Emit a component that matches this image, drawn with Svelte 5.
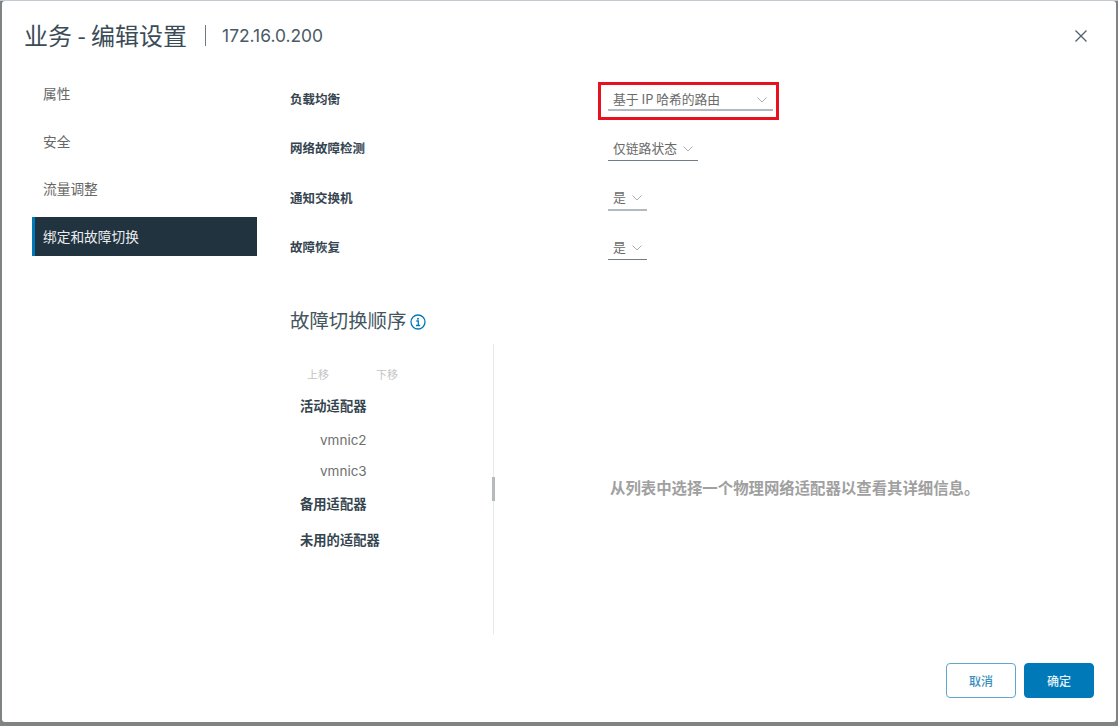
<script>
	const nav = ['属性', '安全', '流量调整', '绑定和故障切换'];
	const active = 3;
	const settings = [
		{ label: '负载均衡', value: '基于 IP 哈希的路由', wide: true, highlight: true, light: true },
		{ label: '网络故障检测', value: '仅链路状态', light: false },
		{ label: '通知交换机', value: '是', light: true },
		{ label: '故障恢复', value: '是', light: false }
	];
</script>

<div class="backdrop">
	<div class="modal">
		<header>
			<h1>业务 - 编辑设置</h1>
			<span class="sep"></span>
			<span class="host">172.16.0.200</span>
			<svg class="close" width="14" height="14" viewBox="0 0 14 14" aria-label="关闭">
				<path d="M1.5 1.5 12.5 12.5M12.5 1.5 1.5 12.5" stroke="#4f626d" stroke-width="1.3" fill="none" />
			</svg>
		</header>

		<div class="body">
			<nav>
				{#each nav as item, i}
					<div class="nav-item" class:active={i === active}>{item}</div>
				{/each}
			</nav>

			<main>
				<div class="settings">
					{#each settings as s}
						<div class="row">
							<div class="label">{s.label}</div>
							<div class="field" class:highlight={s.highlight}>
								<div class="select" class:wide={s.wide} class:light={s.light}>
									<span>{s.value}</span>
									<svg width="10" height="6" viewBox="0 0 10 6">
										<path d="M.5.5 5 5 9.5.5" stroke="#a8b0b5" stroke-width="1" fill="none" />
									</svg>
								</div>
							</div>
						</div>
					{/each}
				</div>

				<h2>
					故障切换顺序
					<svg width="16" height="16" viewBox="0 0 16 16">
						<circle cx="8" cy="8" r="7" stroke="#0079b8" stroke-width="1.3" fill="none" />
						<path d="M6.3 7h2v4.2M6 11.5h4.2" stroke="#0079b8" stroke-width="1.3" fill="none" />
						<circle cx="8" cy="4.7" r="1" fill="#0079b8" />
					</svg>
				</h2>

				<div class="split">
					<div class="tree">
						<div class="actions"><span>上移</span><span>下移</span></div>
						<div class="group">活动适配器</div>
						<div class="nic">vmnic2</div>
						<div class="nic">vmnic3</div>
						<div class="group second">备用适配器</div>
						<div class="group third">未用的适配器</div>
					</div>
					<div class="divider"><span class="handle"></span></div>
					<div class="detail">从列表中选择一个物理网络适配器以查看其详细信息。</div>
				</div>
			</main>
		</div>

		<footer>
			<button class="outline">取消</button>
			<button class="primary">确定</button>
		</footer>
	</div>
</div>

<style>
	:global(body) {
		margin: 0;
	}

	.backdrop {
		height: 726px;
		box-sizing: border-box;
		padding: 0 2px 4px 2px;
		border-top: 1px solid #c3cacf;
		background: #7f8383;
		overflow: hidden;
		font-family: 'Noto Sans CJK SC', 'Inter', sans-serif;
		color: #565656;
	}

	.modal {
		height: 100%;
		display: flex;
		flex-direction: column;
		background: #fff;
		border-radius: 3px;
	}

	header {
		height: 69px;
		box-sizing: border-box;
		padding: 0 23px 0 22px;
		display: flex;
		align-items: center;
		flex: none;
	}

	h1 {
		margin: 0 0 2px;
		font-size: 24px;
		font-weight: 400;
		color: #3b4c58;
	}

	.sep {
		width: 1px;
		height: 21px;
		margin: 0 16px 0 18px;
		background: #6b7a84;
	}

	.host {
		font-family: 'Inter', sans-serif;
		font-size: 17.4px;
		color: #4a5a64;
	}

	.close {
		margin-left: auto;
		margin-right: 5px;
	}

	.body {
		flex: 1;
		display: flex;
		min-height: 0;
	}

	nav {
		width: 225px;
		margin-left: 30px;
		margin-top: 1px;
		flex: none;
		display: flex;
		flex-direction: column;
	}

	.nav-item {
		height: 39px;
		margin-bottom: 8.5px;
		box-sizing: border-box;
		padding-left: 11px;
		line-height: 44px;
		font-size: 13.7px;
		color: #666;
	}

	.nav-item.active {
		margin-top: 3px;
		line-height: 38px;
		background: #21333f;
		border-left: 3px solid #0079b8;
		padding-left: 8px;
		color: #eaedf0;
	}

	main {
		flex: 1;
		margin-left: 33px;
		min-width: 0;
	}

	.settings {
		padding-top: 4px;
	}

	.row {
		height: 49.3px;
		display: flex;
		align-items: center;
	}

	.label {
		width: 318px;
		font-size: 12.5px;
		font-weight: 700;
		color: #35454f;
	}

	.field {
		display: flex;
		box-sizing: border-box;
	}

	.field.highlight {
		margin: 4px 0 0 -10px;
		padding: 0 3px 6px 7px;
		border: 3px solid #e8111f;
	}

	.select {
		height: 27px;
		box-sizing: border-box;
		display: flex;
		align-items: center;
		gap: 6px;
		padding: 0 5px;
		border-bottom: 1px solid #6f7d86;
		font-size: 12.8px;
		color: #6a6a6a;
	}

	.select svg {
		margin-top: 3px;
	}

	.select.light {
		border-bottom: 2px solid #b3babf;
	}

	.select.wide {
		width: 165px;
		height: 26px;
		padding: 3px 6px 0 5px;
		justify-content: space-between;
	}

	h2 {
		margin: 33px 0 0;
		height: 30px;
		display: flex;
		align-items: center;
		gap: 4px;
		font-size: 19.4px;
		font-weight: 400;
		color: #445560;
	}

	h2 svg {
		margin-top: 6px;
	}

	.split {
		display: flex;
		height: 290px;
		margin-top: 10px;
	}

	.tree {
		width: 203px;
		flex: none;
		padding-top: 21px;
	}

	.actions {
		display: flex;
		gap: 47px;
		padding-left: 17px;
		font-size: 11px;
		line-height: 18px;
		color: #c4c4c4;
	}

	.group {
		margin: 14px 0 0 10px;
		font-size: 13.3px;
		font-weight: 700;
		line-height: 18px;
		color: #35454f;
	}

	.group.second {
		margin-top: 15px;
	}

	.group.third {
		margin-top: 18px;
	}

	.nic {
		margin: 16px 0 0 30px;
		font-family: 'Inter', sans-serif;
		font-size: 13.5px;
		line-height: 18px;
		color: #6f6f6f;
	}

	.nic + .nic {
		margin-top: 13px;
	}

	.divider {
		position: relative;
		width: 1px;
		flex: none;
		background: #e6e9eb;
	}

	.handle {
		position: absolute;
		left: -1px;
		top: 133px;
		width: 3px;
		height: 24px;
		background: #b5babd;
	}

	.detail {
		flex: 1;
		padding: 131px 0 0 116px;
		font-size: 15.4px;
		font-weight: 700;
		line-height: 24px;
		color: #a0a0a0;
		white-space: nowrap;
	}

	footer {
		margin-top: auto;
		flex: none;
		display: flex;
		justify-content: flex-end;
		gap: 8px;
		padding: 0 22px 24px 0;
	}

	button {
		width: 70px;
		height: 35px;
		box-sizing: border-box;
		border-radius: 4px;
		font-family: inherit;
		font-size: 12px;
		font-weight: 500;
	}

	.outline {
		background: #fff;
		border: 1px solid #5ea8cf;
		color: #3b8fbd;
	}

	.primary {
		background: #0079b8;
		border: 1px solid #0079b8;
		color: #e6f2f8;
	}
</style>
